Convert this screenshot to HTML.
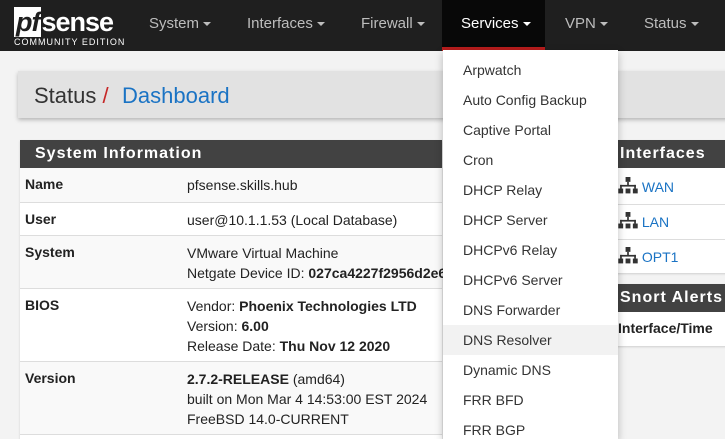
<!DOCTYPE html>
<html><head><meta charset="utf-8"><style>
*{box-sizing:border-box;margin:0;padding:0}
html,body{width:725px;height:439px;overflow:hidden}
body{background:#f3f3f3;font-family:"Liberation Sans",sans-serif;font-size:14px;color:#222;position:relative}
.nav{position:absolute;left:0;top:0;width:725px;height:51px;background:#1f1f1f}
.nav .it{position:absolute;top:15px;color:#bdbdbd;font-size:15px}
.caret{display:inline-block;width:0;height:0;border-left:4px solid transparent;border-right:4px solid transparent;border-top:4px solid currentColor;vertical-align:middle;margin-left:4px}
.act{position:absolute;left:442px;top:0;width:103px;height:51px;background:#080808;border-bottom:4px solid #b71c1c}
.bc{position:absolute;left:18px;top:71px;width:720px;height:47px;background:#e2e2e2;box-shadow:0 2px 4px rgba(0,0,0,.25)}
.bc span{position:absolute;top:12px;font-size:22px}
.panel{position:absolute;background:#fff;box-shadow:0 1px 2px rgba(0,0,0,.15)}
.hd{background:#424242;color:#fff;font-size:16px;font-weight:bold;letter-spacing:1px;height:28px;line-height:28px;padding-left:15px}
.row{position:absolute;left:0;width:100%;border-top:1px solid #ddd}
.row b{position:absolute;left:5px;top:8px}
.row .v{position:absolute;left:167px;top:7px;line-height:20px;white-space:nowrap}
.dd{position:absolute;left:443px;top:50px;width:175px;height:389px;overflow:hidden;background:#fff;box-shadow:0 3px 8px rgba(0,0,0,.25)}
.dd div{height:30px;line-height:30px;padding-left:20px;color:#333;font-size:14px}
a{color:#1a73c4}
svg{vertical-align:-2px}
</style></head><body>
<div class="nav">
<div style="position:absolute;left:14px;top:9px;color:#fff;font-weight:bold;font-size:27px;line-height:26px;letter-spacing:-1px"><span style="background:#fff;color:#1f1f1f;font-style:italic;padding:0 2px">pf</span>sense</div>
<div style="position:absolute;left:14px;top:37px;color:#fff;font-size:9px;letter-spacing:1px">COMMUNITY EDITION</div>
<div class="it" style="left:149px">System<span class="caret"></span></div>
<div class="it" style="left:247px">Interfaces<span class="caret"></span></div>
<div class="it" style="left:361px">Firewall<span class="caret"></span></div>
<div class="act"></div>
<div class="it" style="left:461px;color:#fff">Services<span class="caret"></span></div>
<div class="it" style="left:565px">VPN<span class="caret"></span></div>
<div class="it" style="left:644px">Status<span class="caret"></span></div>
</div>
<div class="bc"><span style="left:16px;color:#333">Status <span style="position:static;color:#c62828">/</span></span><span style="left:104px;color:#1a73c4">Dashboard</span></div>

<div class="panel" style="left:20px;top:140px;width:422px;height:300px">
<div class="hd">System Information</div>
<div class="row" style="top:28px;height:34px;background:#f9f9f9;border-top:none"><b>Name</b><div class="v">pfsense.skills.hub</div></div>
<div class="row" style="top:62px;height:33px"><b>User</b><div class="v">user@10.1.1.53 (Local Database)</div></div>
<div class="row" style="top:95px;height:53px;background:#f9f9f9"><b>System</b><div class="v">VMware Virtual Machine<br>Netgate Device ID: <b style="position:static">027ca4227f2956d2e6</b></div></div>
<div class="row" style="top:148px;height:73px"><b>BIOS</b><div class="v">Vendor: <b style="position:static">Phoenix Technologies LTD</b><br>Version: <b style="position:static">6.00</b><br>Release Date: <b style="position:static">Thu Nov 12 2020</b></div></div>
<div class="row" style="top:221px;height:73px;background:#f9f9f9"><b>Version</b><div class="v"><b style="position:static">2.7.2-RELEASE</b> (amd64)<br>built on Mon Mar 4 14:53:00 EST 2024<br>FreeBSD 14.0-CURRENT</div></div>
<div class="row" style="top:294px;height:10px"></div>
</div>

<svg width="0" height="0" style="position:absolute"><defs><symbol id="net" viewBox="0 0 16 14"><rect x="6" y="0" width="4" height="4" fill="#333"/><rect x="7.3" y="4" width="1.4" height="3" fill="#333"/><rect x="1.5" y="6.5" width="13" height="1.4" fill="#333"/><rect x="1.5" y="6.5" width="1.4" height="3" fill="#333"/><rect x="13.1" y="6.5" width="1.4" height="3" fill="#333"/><rect x="0" y="9.5" width="4" height="4" fill="#333"/><rect x="6" y="9.5" width="4" height="4" fill="#333"/><rect x="12" y="9.5" width="4" height="4" fill="#333"/></symbol></defs></svg>
<div class="panel" style="left:450px;top:140px;width:290px;height:133px">
<div class="hd" style="padding-left:170px">Interfaces</div>
<div class="row" style="top:30px;height:34px;border-top:none"><div class="v" style="left:168px;top:7px"><svg width="20" height="17"><use href="#net"/></svg> <a>WAN</a></div></div>
<div class="row" style="top:64px;height:35px"><div class="v" style="left:168px;top:7px"><svg width="20" height="17"><use href="#net"/></svg> <a>LAN</a></div></div>
<div class="row" style="top:99px;height:34px"><div class="v" style="left:168px;top:7px"><svg width="20" height="17"><use href="#net"/></svg> <a>OPT1</a></div></div>
</div>
<div class="panel" style="left:450px;top:284px;width:290px;height:62px">
<div class="hd" style="padding-left:170px">Snort Alerts</div>
<div class="row" style="top:28px;height:34px;border-top:none"><b style="left:168px;top:8px">Interface/Time</b></div>
</div>

<div class="dd">
<div style="margin-top:5px">Arpwatch</div><div>Auto Config Backup</div><div>Captive Portal</div><div>Cron</div><div>DHCP Relay</div><div>DHCP Server</div><div>DHCPv6 Relay</div><div>DHCPv6 Server</div><div>DNS Forwarder</div><div style="background:#f2f2f2">DNS Resolver</div><div>Dynamic DNS</div><div>FRR BFD</div><div>FRR BGP</div>
</div>
</body></html>
